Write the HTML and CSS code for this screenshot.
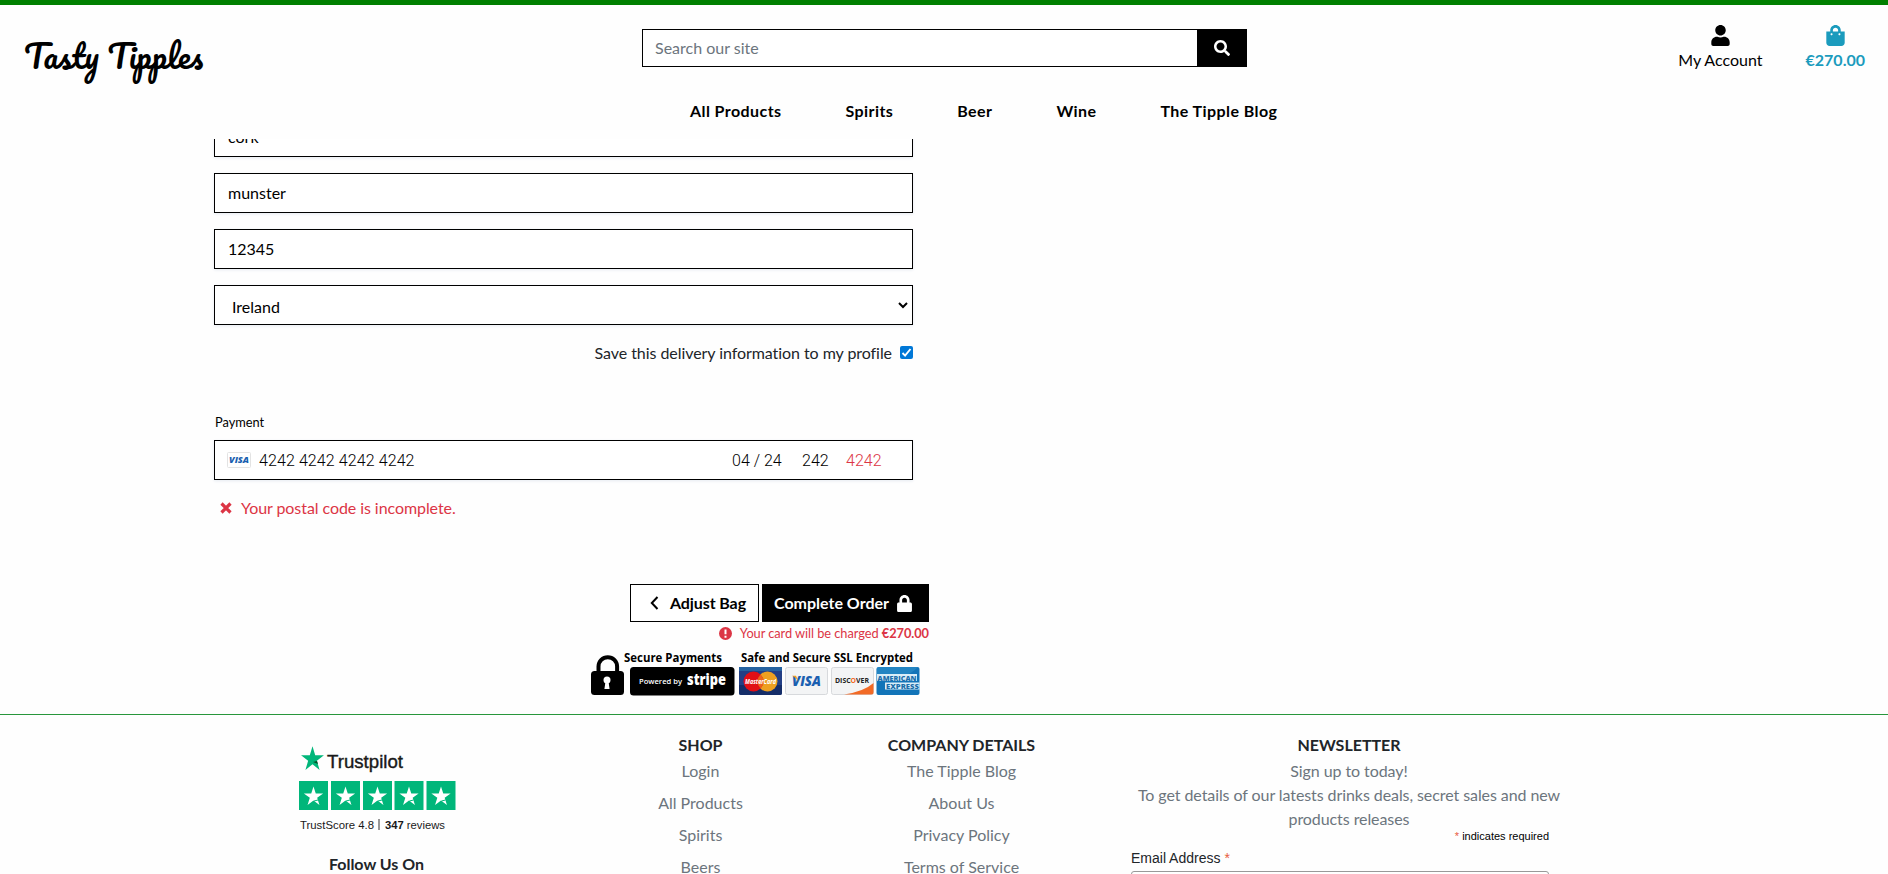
FILE: index.html
```html
<!DOCTYPE html>
<html lang="en">
<head>
<meta charset="utf-8">
<title>Tasty Tipples - Checkout</title>
<link rel="stylesheet" href="styles.css">
</head>
<body>
<svg class="defs" aria-hidden="true">
  <symbol id="star" viewBox="0 0 24 24"><path d="M12 1l2.6 8.1H23l-6.8 5 2.6 8.1-6.8-5-6.8 5 2.6-8.1-6.8-5h8.4z"/></symbol>
  <symbol id="lock" viewBox="0 0 448 512"><path d="M400 224h-24v-72C376 68.2 307.800 0 224 0S72 68.200 72 152v72H48c-26.500 0-48 21.500-48 48v192c0 26.500 21.500 48 48 48h352c26.500 0 48-21.500 48-48V272c0-26.500-21.500-48-48-48zm-104 0H152v-72c0-39.700 32.300-72 72-72s72 32.300 72 72v72z"/></symbol>
</svg>
<header class="header">
  <div class="header-top">
    <a class="logo">Tasty Tipples</a>
    <form class="search">
      <input type="text" placeholder="Search our site">
      <button type="button" aria-label="Search"><svg width="16" height="16" viewBox="0 0 512 512"><path fill="#fff" d="M505 442.700L405.300 343c-4.500-4.500-10.600-7-17-7H372c27.600-35.300 44-79.700 44-128C416 93.100 322.900 0 208 0S0 93.100 0 208s93.100 208 208 208c48.300 0 92.700-16.400 128-44v16.300c0 6.400 2.500 12.500 7 17l99.700 99.700c9.400 9.400 24.600 9.400 33.900 0l28.300-28.300c9.400-9.400 9.400-24.600.1-34zM208 336c-70.700 0-128-57.200-128-128 0-70.700 57.200-128 128-128 70.700 0 128 57.200 128 128 0 70.700-57.200 128-128 128z"/></svg></button>
    </form>
    <div class="account-links">
      <a class="account"><svg width="19" height="21" viewBox="0 0 448 512"><path d="M224 256c70.700 0 128-57.300 128-128S294.700 0 224 0 96 57.300 96 128s57.300 128 128 128zm89.600 32h-16.700c-22.200 10.200-46.900 16-72.900 16s-50.600-5.800-72.900-16h-16.700C60.200 288 0 348.200 0 422.400V464c0 26.500 21.500 48 48 48h352c26.500 0 48-21.500 48-48v-41.600c0-74.200-60.200-134.400-134.400-134.400z"/></svg><span>My Account</span></a>
      <a class="bag"><svg width="19" height="21" viewBox="0 0 448 512"><path d="M352 160v-32C352 57.420 294.579 0 224 0 153.420 0 96 57.420 96 128v32H0v272c0 44.183 35.817 80 80 80h288c44.183 0 80-35.817 80-80V160h-96zm-192-32c0-35.290 28.710-64 64-64s64 28.710 64 64v32H160v-32zm160 120c-13.255 0-24-10.745-24-24s10.745-24 24-24 24 10.745 24 24-10.745 24-24 24zm-192 0c-13.255 0-24-10.745-24-24s10.745-24 24-24 24 10.745 24 24-10.745 24-24 24z"/></svg><span>€270.00</span></a>
    </div>
  </div>
  <nav class="nav"><a>All Products</a><a>Spirits</a><a>Beer</a><a>Wine</a><a>The Tipple Blog</a></nav>
</header>

<main class="main">
  <form class="checkout">
    <div class="field">cork</div>
    <div class="field">munster</div>
    <div class="field">12345</div>
    <div class="field select"><span>Ireland</span><svg width="10" height="7" viewBox="0 0 10 7"><path d="M1 1l4 4 4-4" fill="none" stroke="#000" stroke-width="2"/></svg></div>
    <label class="save"><span>Save this delivery information to my profile</span>
      <svg width="13" height="13" viewBox="0 0 13 13"><rect width="13" height="13" rx="2" fill="#0078d7"/><path d="M2.500 7l2.600 2.600L10.500 3" fill="none" stroke="#fff" stroke-width="1.900"/></svg></label>
    <div class="legend">Payment</div>
    <div class="field card">
      <svg width="24" height="16" viewBox="0 0 24 16"><rect x=".5" y=".5" width="23" height="15" rx="1" fill="#fff" stroke="#e3e3e3"/><text x="2" y="11.400" class="visa" font-size="9" textLength="20" lengthAdjust="spacingAndGlyphs">VISA</text></svg>
      <span class="number">4242 4242 4242 4242</span><span class="expiry">04 / 24</span><span class="cvc">242</span><span class="postal">4242</span>
    </div>
    <div class="error"><svg width="12" height="12" viewBox="0 0 12 12"><path d="M1.500 1.500l9 9m0-9l-9 9" stroke="#dc3545" stroke-width="3.200"/></svg><span>Your postal code is incomplete.</span></div>
  </form>
  <section class="submit">
    <div class="buttons">
      <a class="btn adjust"><svg width="9" height="14" viewBox="0 0 9 14"><path d="M7.500 1L1.800 7l5.700 6" fill="none" stroke="#000" stroke-width="2"/></svg><span>Adjust Bag</span></a>
      <a class="btn complete"><span>Complete Order</span><svg class="fill-white" width="15" height="17"><use href="#lock"/></svg></a>
    </div>
    <p class="charge"><svg width="13" height="13" viewBox="0 0 13 13"><circle cx="6.500" cy="6.500" r="6.500" fill="#dc3545"/><path d="M6.500 2.500v4.700M6.500 8.700v2" stroke="#fff" stroke-width="2"/></svg><span>Your card will be charged <b>€270.00</b></span></p>
    <svg class="badge" width="331" height="44" viewBox="0 0 331 44">
      <path d="M8.500 20v-6.500a9.300 9.300 0 0 1 18.600 0V20" fill="none" stroke="#000" stroke-width="4"/>
      <rect x="1" y="18" width="33" height="24" rx="3.500"/>
      <circle cx="17" cy="27" r="3.500" fill="#fff"/><path d="M15.600 28h2.800l1.200 8h-5.200z" fill="#fff"/>
      <g class="badge-title"><text x="34" y="9" textLength="98" lengthAdjust="spacingAndGlyphs">Secure Payments</text><text x="151" y="9" textLength="172" lengthAdjust="spacingAndGlyphs">Safe and Secure SSL Encrypted</text></g>
      <rect x="40" y="14" width="104.500" height="28.500" rx="3.500"/>
      <text x="49" y="31" class="powered" textLength="43" lengthAdjust="spacingAndGlyphs">Powered by</text>
      <text x="97" y="32" class="stripe" textLength="39" lengthAdjust="spacingAndGlyphs">stripe</text>
      <rect x="149" y="14" width="43" height="28" rx="2" fill="#233f85"/><path d="M149 14h43v4h-43z" fill="#2562a0"/><path d="M149 32h43v8a2 2 0 0 1-2 2h-39a2 2 0 0 1-2-2z" fill="#152d68"/>
      <circle cx="177.500" cy="28.500" r="10" fill="#eda020"/>
      <circle cx="163.500" cy="28.500" r="10" fill="#e10f16"/><path d="M170.500 21.400A10 10 0 0 0 170.500 35.600A10 10 0 0 0 173.500 28.500A10 10 0 0 0 170.500 21.400" fill="#eb641a"/>
      <text x="155" y="31" class="mc" textLength="31" lengthAdjust="spacingAndGlyphs">MasterCard</text>
      <g fill="#f3f4f5" stroke="#d7d9dc"><rect x="195.500" y="14.500" width="42" height="27" rx="2"/><rect x="241.500" y="14.500" width="42" height="27" rx="2"/></g>
      <text x="202" y="33" class="visa" font-size="14" textLength="29" lengthAdjust="spacingAndGlyphs">VISA</text><path d="M202 22.800h4l2.800 6.200c-1.500-2.500-3.500-4.500-6.800-6.200" fill="#f0a020"/>
      <path d="M254 41.500q20-3 29.500-11.500v9.500a2 2 0 0 1-2 2z" fill="#f26a26"/>
      <text x="245" y="29.500" class="discover" textLength="34" lengthAdjust="spacingAndGlyphs">DISC<tspan fill="#f26a26">O</tspan>VER</text>
      <rect x="286.500" y="14" width="43" height="28" rx="2" fill="#1274b8"/><path d="M288 14h40q-12 13-41.500 14V16z" fill="#3899cf" opacity=".45"/>
      <g class="amex"><rect x="287" y="21" width="40" height="7"/><rect x="295" y="29.500" width="34.500" height="7"/><text x="287.500" y="27.500" textLength="39" lengthAdjust="spacingAndGlyphs">AMERICAN</text><text x="296" y="36" textLength="33" lengthAdjust="spacingAndGlyphs">EXPRESS</text></g>
    </svg>
  </section>
</main>

<footer class="footer">
  <div class="trust">
    <svg width="158" height="88" viewBox="0 0 158 88">
      <svg x="1" y="-1" width="25" height="27" viewBox="0 0 24 24" preserveAspectRatio="none" fill="#00b67a"><use href="#star"/></svg><path d="M14 16l4-1 1 3z" fill="#005128"/>
      <text x="28" y="22" class="tp-name" textLength="76" lengthAdjust="spacingAndGlyphs">Trustpilot</text>
      <g fill="#00b67a"><path d="M0 35h29v29H0zM32 35h29v29H32zM64 35h29v29H64zM95.500 35h29v29h-29zM127.500 35h29v29h-29z"/></g>
      <g fill="#fff"><use href="#star" x="4" y="39.500" width="21" height="21"/><use href="#star" x="36" y="39.500" width="21" height="21"/><use href="#star" x="68" y="39.500" width="21" height="21"/><use href="#star" x="99.500" y="39.500" width="21" height="21"/><use href="#star" x="131.500" y="39.500" width="21" height="21"/></g>
      <path d="M15 55l4-1m28 1l4-1m28 1l4-1m27.500 1l4-1m28 1l4-1" stroke="#00b67a"/>
      <g class="tp-score"><text x="1" y="83" textLength="74" lengthAdjust="spacingAndGlyphs">TrustScore 4.8</text><path d="M80 73v11" stroke="#333"/><text x="86" y="83" textLength="60" lengthAdjust="spacingAndGlyphs"><tspan class="bold">347</tspan> reviews</text></g>
    </svg>
    <h4>Follow Us On</h4>
  </div>
  <div class="links"><h4>SHOP</h4><a>Login</a><a>All Products</a><a>Spirits</a><a>Beers</a></div>
  <div class="links"><h4>COMPANY DETAILS</h4><a>The Tipple Blog</a><a>About Us</a><a>Privacy Policy</a><a>Terms of Service</a></div>
  <div class="newsletter">
    <h4>NEWSLETTER</h4>
    <p>Sign up to today!</p>
    <p>To get details of our latests drinks deals, secret sales and new products releases</p>
    <div class="signup">
      <div class="required"><i>*</i> indicates required</div>
      <label>Email Address <i>*</i></label>
      <input type="text" aria-label="Email Address">
    </div>
  </div>
</footer>
</body>
</html>
```
FILE: styles.css
```css
* { box-sizing: border-box; }
html { height: 100%; overflow: hidden; }
body { margin: 0; height: 874px; overflow: hidden; background: #fefefe; color: #212529; font: 16px/24px Lato, sans-serif; }
svg { display: block; flex: none; overflow: visible; }
h4, p { margin: 0; }
.defs { position: absolute; width: 0; height: 0; }

.header { height: 139px; border-top: 5px solid #008000; color: #000; }
.header-top { height: 85px; display: grid; grid-template-columns: 642px 605px 1fr; align-items: start; }
.logo { padding: 22px 0 0 24px; font: 400 32px/56px Pacifico, cursive; white-space: nowrap; }
.search { display: flex; height: 38px; margin-top: 24px; }
.search input { width: 555px; border: 1px solid #000; border-right: 0; padding: 0 12px 2px; font: 16px Lato, sans-serif; background: #fff; outline: 0; }
.search input::placeholder { color: #6c757d; opacity: 1; }
.search button { flex: 1; border: 0; padding: 0; background: #000; display: flex; align-items: center; justify-content: center; }
.account-links { display: flex; justify-content: flex-end; gap: 43px; padding: 20px 23px 0 0; }
.account-links a { display: flex; flex-direction: column; align-items: center; gap: 2px; }
.bag { color: #1b9bbd; fill: #1b9bbd; font-weight: 700; }
.nav { display: flex; gap: 64px; padding: 9px 0 0 690px; font-weight: 700; letter-spacing: .42px; white-space: nowrap; }

.main { height: 575px; overflow: hidden; padding-left: 214px; }
.checkout { width: 699px; margin-top: -22px; }
.field { height: 40px; margin-bottom: 16px; border: 1px solid #000; padding: 7px 12px 7px 13px; background: #fff; color: #000; box-shadow: 0 1px 3px #e6ebf1; }
.select { display: flex; justify-content: space-between; padding: 9px 4px 5px 17px; }
.select svg { margin-top: 7px; }
.save { display: flex; justify-content: flex-end; gap: 8px; margin-top: 16px; letter-spacing: -.06px; }
.save svg { margin-top: 5px; }
.legend { margin-top: 45px; height: 28px; padding-left: 1px; font-size: 12.8px; color: #000; }
.card { display: flex; align-items: center; padding-left: 12px; font: 300 16px Roboto, sans-serif; margin-bottom: 16px; margin-top: 2px; }
.number { margin-left: 8px; width: 473px; letter-spacing: .1px; }
.expiry { width: 70px; }
.cvc { width: 44px; }
.postal { color: #dc3545; }
.visa { font-family: "Open Sans", sans-serif; font-weight: 800; font-style: italic; fill: #1a5fb0; }
.error { display: flex; align-items: center; gap: 9px; padding-left: 6px; color: #dc3545; letter-spacing: -.07px; }
.submit { width: 715px; margin-top: 64px; display: flex; flex-direction: column; align-items: flex-end; }
.buttons { display: flex; gap: 3px; }
.btn { height: 38px; border: 1px solid #000; font-weight: 700; color: #000; display: flex; align-items: center; justify-content: center; background: #fff; white-space: nowrap; }
.adjust { width: 129px; gap: 11px; padding-left: 7px; letter-spacing: -.1px; }
.complete { width: 167px; gap: 8px; padding-right: 5px; background: #000; color: #fff; }
.fill-white { fill: #fff; }
.charge { display: flex; align-items: center; gap: 8px; height: 22px; font-size: 12.8px; color: #dc3545; letter-spacing: -.05px; }
.badge { margin: 9px 8px 0 0; }
.badge-title { font: 700 11.5px "Open Sans", sans-serif; }
.powered { font: 600 7.5px "Open Sans", sans-serif; fill: #fff; }
.stripe { font: 800 15px "Open Sans", sans-serif; fill: #fff; }
.mc { font: italic 700 7px "Open Sans", sans-serif; fill: #fff; }
.discover { font: 700 7.5px "Open Sans", sans-serif; fill: #222; }
.amex rect { fill: #d9edf8; }
.amex text { font: 800 7px "Open Sans", sans-serif; fill: #1b6eaa; }

.footer { height: 160px; overflow: hidden; border-top: 1px solid #28963c; display: grid; grid-template-columns: 387px 261px 261px 514px; padding-left: 183px; text-align: center; }
.footer h4 { font-size: 16px; font-weight: 700; line-height: 24px; }
.trust { display: flex; flex-direction: column; align-items: center; padding: 31px 0 0 2px; }
.trust h4 { margin: 18px 2px 0 0; }
.tp-name { font: 19px "Liberation Sans", Arial, sans-serif; fill: #191919; stroke: #191919; stroke-width: .4px; }
.tp-score { font: 11.5px "Liberation Sans", Arial, sans-serif; fill: #191919; }
.bold { font-weight: 700; }
.links { display: flex; flex-direction: column; gap: 8px; padding-top: 18px; color: #6c757d; }
.links h4 { color: #212529; margin-bottom: -6px; }
.newsletter { padding: 18px 38px 0; }
.newsletter h4 { margin-bottom: 2px; }
.newsletter p { color: #6c757d; letter-spacing: -.08px; }
.signup { width: 418px; text-align: left; font: 14px "Liberation Sans", Arial, sans-serif; margin: -1px 0 0 1px; }
.required { font-size: 11px; line-height: 12px; text-align: right; color: #000; }
.signup i { color: #e85c41; font-style: normal; }
.signup label { display: block; line-height: 24px; margin: 4px 0 1px; }
.signup input { display: block; width: 100%; height: 32px; border: 1px solid #999; border-radius: 3px; background: #fff; }
```
